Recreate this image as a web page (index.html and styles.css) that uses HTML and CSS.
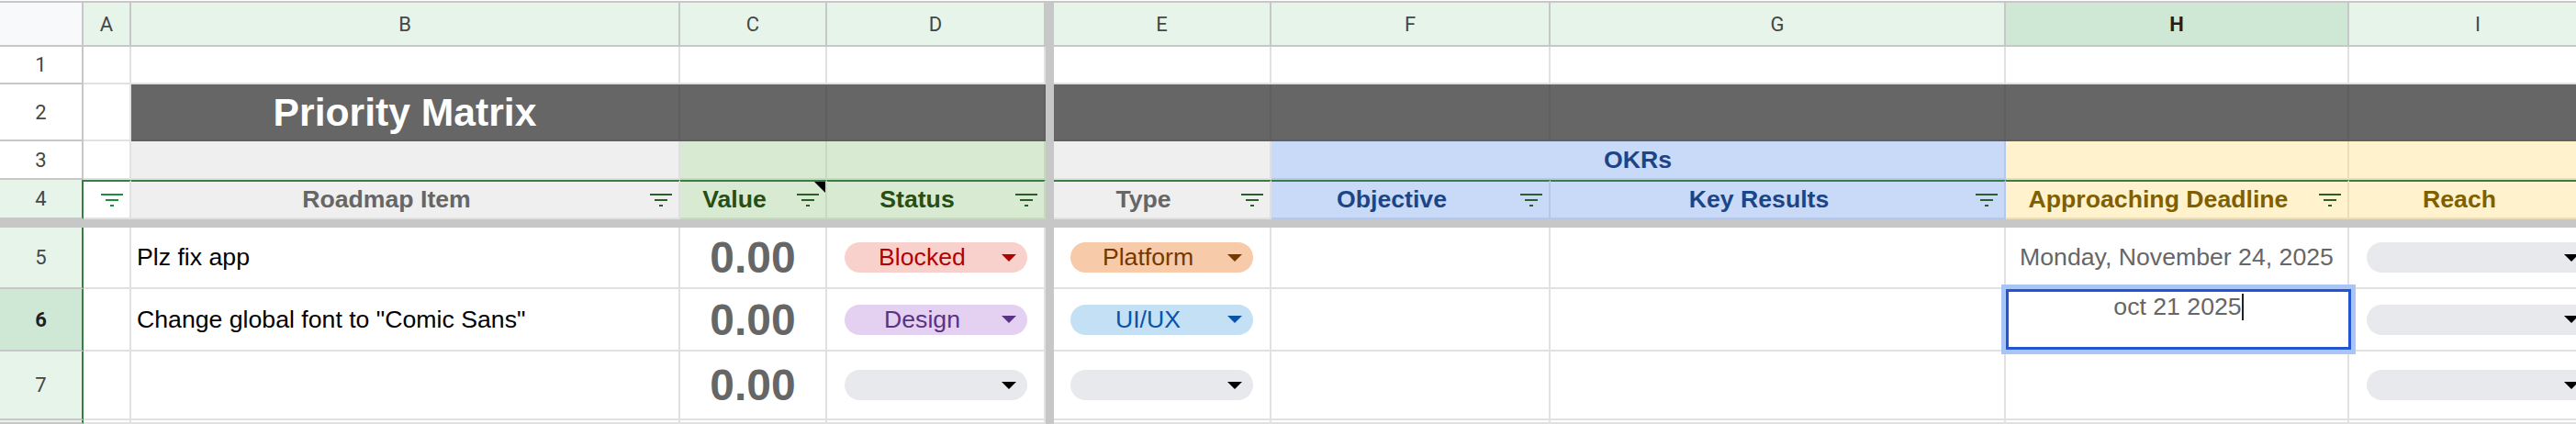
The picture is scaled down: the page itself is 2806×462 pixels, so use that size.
FILE: index.html
```html
<!DOCTYPE html>
<html>
<head>
<meta charset="utf-8">
<title>Priority Matrix</title>
<link rel="stylesheet" href="styles.css">
</head>
<body>
<div class="sheet">
  <div class="fz-col"></div>
  <div class="fz-row"></div>

  <div class="c corner"></div>
  <div class="c ch">A</div>
  <div class="c ch">B</div>
  <div class="c ch">C</div>
  <div class="c ch">D</div>
  <div class="c ch">E</div>
  <div class="c ch">F</div>
  <div class="c ch">G</div>
  <div class="c ch sel">H</div>
  <div class="c ch">I</div>

  <div class="c rh">1</div>
  <div class="c"></div><div class="c"></div><div class="c"></div><div class="c"></div>
  <div class="c"></div><div class="c"></div><div class="c"></div><div class="c"></div><div class="c"></div>

  <div class="c rh">2</div>
  <div class="c"></div>
  <div class="c dark title">Priority Matrix</div>
  <div class="c dark"></div><div class="c dark"></div><div class="c dark"></div>
  <div class="c dark"></div><div class="c dark"></div><div class="c dark"></div><div class="c dark"></div>

  <div class="c rh">3</div>
  <div class="c"></div>
  <div class="c gray"></div>
  <div class="c green"></div>
  <div class="c green"></div>
  <div class="c gray"></div>
  <div class="c blue hd2 span2">OKRs</div>
  <div class="c yellow"></div>
  <div class="c yellow"></div>

  <div class="c rh f">4</div>
  <div class="c top icon-only">
    <svg class="fi fi-light" viewBox="0 0 24 14"><rect x="0" y="0" width="24" height="2"/><rect x="5" y="6" width="14" height="2"/><rect x="10" y="12" width="4" height="2"/></svg>
  </div>
  <div class="c top gray hd"><span class="lbl">Roadmap Item</span><svg class="fi" viewBox="0 0 24 14"><rect x="0" y="0" width="24" height="2"/><rect x="5" y="6" width="14" height="2"/><rect x="10" y="12" width="4" height="2"/></svg></div>
  <div class="c top green hd"><span class="lbl">Value</span><svg class="fi" viewBox="0 0 24 14"><rect x="0" y="0" width="24" height="2"/><rect x="5" y="6" width="14" height="2"/><rect x="10" y="12" width="4" height="2"/></svg><svg class="note" viewBox="0 0 12 12"><polygon points="0,0 12,0 12,12"/></svg></div>
  <div class="c top green hd"><span class="lbl">Status</span><svg class="fi" viewBox="0 0 24 14"><rect x="0" y="0" width="24" height="2"/><rect x="5" y="6" width="14" height="2"/><rect x="10" y="12" width="4" height="2"/></svg></div>
  <div class="c top gray hd"><span class="lbl">Type</span><svg class="fi" viewBox="0 0 24 14"><rect x="0" y="0" width="24" height="2"/><rect x="5" y="6" width="14" height="2"/><rect x="10" y="12" width="4" height="2"/></svg></div>
  <div class="c top blue hd"><span class="lbl">Objective</span><svg class="fi" viewBox="0 0 24 14"><rect x="0" y="0" width="24" height="2"/><rect x="5" y="6" width="14" height="2"/><rect x="10" y="12" width="4" height="2"/></svg></div>
  <div class="c top blue hd"><span class="lbl">Key Results</span><svg class="fi" viewBox="0 0 24 14"><rect x="0" y="0" width="24" height="2"/><rect x="5" y="6" width="14" height="2"/><rect x="10" y="12" width="4" height="2"/></svg></div>
  <div class="c top yellow hd"><span class="lbl">Approaching Deadline</span><svg class="fi" viewBox="0 0 24 14"><rect x="0" y="0" width="24" height="2"/><rect x="5" y="6" width="14" height="2"/><rect x="10" y="12" width="4" height="2"/></svg></div>
  <div class="c top yellow hd"><span class="lbl">Reach</span><svg class="fi" viewBox="0 0 24 14"><rect x="0" y="0" width="24" height="2"/><rect x="5" y="6" width="14" height="2"/><rect x="10" y="12" width="4" height="2"/></svg></div>

  <div class="c rh f">5</div>
  <div class="c"></div>
  <div class="c txt">Plz fix app</div>
  <div class="c num">0.00</div>
  <div class="c"><div class="chip red"><span class="t">Blocked</span><svg class="arr" viewBox="0 0 16 8"><polygon points="0,0 16,0 8,8"/></svg></div></div>
  <div class="c ce"><div class="chip orange"><span class="t">Platform</span><svg class="arr" viewBox="0 0 16 8"><polygon points="0,0 16,0 8,8"/></svg></div></div>
  <div class="c"></div>
  <div class="c"></div>
  <div class="c date">Monday, November 24, 2025</div>
  <div class="c"><div class="chip empty"><span class="t"></span><svg class="arr" viewBox="0 0 16 8"><polygon points="0,0 16,0 8,8"/></svg></div></div>

  <div class="c rh f rsel">6</div>
  <div class="c"></div>
  <div class="c txt">Change global font to "Comic Sans"</div>
  <div class="c num">0.00</div>
  <div class="c"><div class="chip purple"><span class="t">Design</span><svg class="arr" viewBox="0 0 16 8"><polygon points="0,0 16,0 8,8"/></svg></div></div>
  <div class="c ce"><div class="chip lblue"><span class="t">UI/UX</span><svg class="arr" viewBox="0 0 16 8"><polygon points="0,0 16,0 8,8"/></svg></div></div>
  <div class="c"></div>
  <div class="c"></div>
  <div class="c"><div class="editor"><span class="etext">oct 21 2025</span><span class="caret"></span></div></div>
  <div class="c"><div class="chip empty"><span class="t"></span><svg class="arr" viewBox="0 0 16 8"><polygon points="0,0 16,0 8,8"/></svg></div></div>

  <div class="c rh f">7</div>
  <div class="c"></div>
  <div class="c txt"></div>
  <div class="c num">0.00</div>
  <div class="c"><div class="chip empty"><span class="t"></span><svg class="arr" viewBox="0 0 16 8"><polygon points="0,0 16,0 8,8"/></svg></div></div>
  <div class="c ce"><div class="chip empty"><span class="t"></span><svg class="arr" viewBox="0 0 16 8"><polygon points="0,0 16,0 8,8"/></svg></div></div>
  <div class="c"></div>
  <div class="c"></div>
  <div class="c"></div>
  <div class="c"><div class="chip empty"><span class="t"></span><svg class="arr" viewBox="0 0 16 8"><polygon points="0,0 16,0 8,8"/></svg></div></div>

  <div class="c rh f"></div>
  <div class="c"></div><div class="c"></div><div class="c"></div><div class="c"></div>
  <div class="c"></div><div class="c"></div><div class="c"></div><div class="c"></div><div class="c"></div>
</div>
</body>
</html>
```

FILE: styles.css
```css
* { box-sizing: border-box; margin: 0; padding: 0; }
html, body { background: #ffffff; overflow: hidden; }
body { width: 2806px; height: 462px; }

.sheet {
  display: grid;
  width: 2841px;
  margin-top: 1px;
  border-top: 2px solid #c7c7c7;
  grid-template-columns: 91px 52px 598px 160px 238px 9px 237px 304px 496px 374px 282px;
  grid-template-rows: 48px 41px 62px 42px 43px 9px 67px 68px 75px 4px;
  font-family: "Liberation Sans", Arial, sans-serif;
  font-size: 26.67px;
  color: #000000;
}

.fz-col { grid-column: 6; grid-row: 1 / -1; background: #c7c7c7; z-index: 3; position: relative; }
.fz-row { grid-row: 6; grid-column: 1 / -1; background: #c7c7c7; z-index: 2; position: relative; }

.c {
  position: relative;
  display: flex;
  align-items: center;
  min-width: 0;
  white-space: nowrap;
  border-right: 2px solid #e1e1e1;
  border-bottom: 2px solid #e1e1e1;
  background: #ffffff;
}

/* headers */
.corner { background: #f8f9fa; border-color: #c7c7c7; }
.ch {
  justify-content: center;
  background: #e7f4ea;
  border-color: #c7c7c7;
  font-family: Roboto, "Liberation Sans", sans-serif;
  font-size: 22px;
  color: #444746;
}
.ch.sel { background: #cfe8d6; font-weight: bold; color: #1f1f1f; }
.rh {
  justify-content: center;
  border-color: #c7c7c7;
  font-family: Roboto, "Liberation Sans", sans-serif;
  font-size: 22px;
  color: #444746;
}
.rh.f { background: #e7f4ea; border-right-color: #3a7d44; }
.rh.rsel { background: #cfe8d6; font-weight: bold; color: #1f1f1f; }

/* fills */
.dark { background: #666666; border-color: #5f5f5f; }
.title {
  justify-content: center;
  color: #ffffff;
  font-weight: bold;
  font-size: 42.67px;
}
.gray { background: #efefef; border-color: #e0e0e0; }
.green { background: #d9ead3; border-color: #c8d9c2; }
.blue { background: #c9daf8; border-color: #b6c8ea; }
.yellow { background: #fff2cc; border-color: #ebdfb9; }
.span2 { grid-column: span 2; }
.hd2 { justify-content: center; font-weight: bold; color: #1c4587; }

/* filter header row */
.top { border-top: 2px solid #3a7d44; }
.hd { font-weight: bold; }
.hd .lbl { flex: 1; text-align: center; }
.gray.hd { color: #666666; }
.green.hd { color: #274e13; }
.blue.hd { color: #1c4587; }
.yellow.hd { color: #7f6000; }
.fi { width: 24px; height: 14px; flex: none; margin: 0 7px 0 9px; fill: #2b5e2b; }
.icon-only { justify-content: flex-end; }
.fi-light { fill: #1e8e3e; margin-left: 0; }
.note { position: absolute; top: 0; right: 0; width: 12px; height: 12px; fill: #000000; }

/* body cells */
.txt { padding-left: 6px; }
.num { justify-content: center; font-weight: bold; font-size: 48px; color: #666666; }
.date { justify-content: center; color: #666666; }

.chip {
  flex: 1;
  display: flex;
  align-items: center;
  height: 33px;
  margin: 0 18px 0 19px;
  border-radius: 17px;
  padding-right: 12px;
}
.ce .chip { margin-left: 18px; }
.chip .t { flex: 1; text-align: center; }
.arr { width: 16px; height: 8px; flex: none; margin-left: 2px; }
.red { background: #f9d1cc; color: #b10202; fill: #b10202; }
.orange { background: #f7caa9; color: #753800; fill: #753800; }
.purple { background: #e4d0f0; color: #5a3286; fill: #5a3286; }
.lblue { background: #c4e0f4; color: #0a53a8; fill: #0a53a8; }
.empty { background: #e8e9ec; fill: #000000; }

/* in-cell editor */
.editor {
  position: absolute;
  left: 0;
  top: 0;
  width: 376px;
  height: 66px;
  z-index: 5;
  background: #ffffff;
  border: 3px solid #2354d2;
  box-shadow: 0 0 0 5px #a9c5f6;
  text-align: center;
  line-height: 32px;
  color: #666666;
}
.caret {
  display: inline-block;
  vertical-align: top;
  width: 2px;
  height: 29px;
  margin-top: 2px;
  background: #222222;
}
```
